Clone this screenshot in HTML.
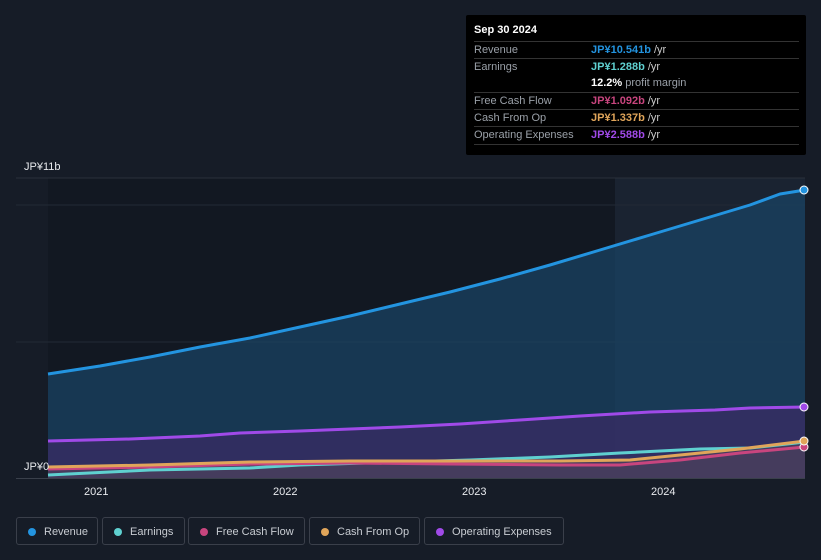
<!DOCTYPE html>
<html><head><style>
body{margin:0;background:#161c27;font-family:"Liberation Sans",sans-serif;width:821px;height:560px;overflow:hidden;position:relative}
.tip{position:absolute;left:466px;top:15px;width:340px;height:140px;background:#000;border-radius:2px;color:#fff;font-size:11px}
.tip .h{position:absolute;left:8px;top:9px;font-weight:bold;font-size:11px}
.row{position:absolute;left:8px;width:325px;border-top:1px solid #333;height:17px;line-height:17px;color:#9aa0a8}
.row span{position:absolute;left:117px}
.leg{position:absolute;top:517px;height:28px;border:1px solid #3a3f4a;border-radius:3px;color:#c8ccd2;font-size:11px;line-height:28px;box-sizing:border-box}
.leg i{position:absolute;left:11px;top:10px;width:8px;height:8px;border-radius:50%}
.leg b{font-weight:normal;position:absolute;left:27px}
</style></head><body>
<svg width="821" height="560" style="position:absolute;left:0;top:0">
<rect x="48" y="178" width="567" height="300" fill="#121822"/>
<rect x="615" y="178" width="190" height="300" fill="#1a2331"/>
<line x1="16" y1="178" x2="805" y2="178" stroke="#2a303b"/>
<line x1="16" y1="205" x2="805" y2="205" stroke="#232a35"/>
<line x1="16" y1="342" x2="805" y2="342" stroke="#232a35"/>
<line x1="16" y1="478.5" x2="805" y2="478.5" stroke="#3a404b"/>
<path d="M48,374 100,366 150,357 200,347 250,338 300,327 350,316 400,304 450,292 500,279 550,265 600,250 650,235 700,220 750,205 780,194 805,190 V478 H48Z" fill="#1a4566" fill-opacity="0.7"/>
<path d="M48,441 130,439 200,436 240,433 300,431 400,427 460,424 520,420 580,416 650,412 715,410 750,408 805,407 V478 H48Z" fill="#3a2c66" fill-opacity="0.75"/>
<path d="M48,467 150,465 250,462 350,461 450,461 560,461 630,460 680,455 740,449 805,441 V478 H48Z" fill="#5a4a5a" fill-opacity="0.5"/>
<g fill="none" stroke-width="3" stroke-linejoin="round">
<polyline points="48,374 100,366 150,357 200,347 250,338 300,327 350,316 400,304 450,292 500,279 550,265 600,250 650,235 700,220 750,205 780,194 805,190" stroke="#2394e0"/>
<polyline points="48,441 130,439 200,436 240,433 300,431 400,427 460,424 520,420 580,416 650,412 715,410 750,408 805,407" stroke="#a04ae8"/>
<polyline points="48,475 150,470 250,468 300,465 400,462 470,460 550,457 620,453 700,449 750,448 805,442" stroke="#5fd0d0"/>
<polyline points="48,469 150,467 250,464 350,463 450,464 560,465 620,465 680,460 740,453 805,447" stroke="#c8457e"/>
<polyline points="48,467 150,465 250,462 350,461 450,461 560,461 630,460 680,455 740,449 805,441" stroke="#e0a55a"/>
</g>
<circle cx="804" cy="190" r="4" fill="#2394e0" stroke="#fff"/>
<circle cx="804" cy="407" r="4" fill="#a04ae8" stroke="#fff"/>
<circle cx="804" cy="447" r="4" fill="#c8457e" stroke="#fff"/>
<circle cx="804" cy="441" r="4" fill="#e0a55a" stroke="#fff"/>
<g fill="#e8eaee" font-size="11" font-family="Liberation Sans">
<text x="24" y="170">JP¥11b</text>
<text x="24" y="470">JP¥0</text>
<text x="84" y="495">2021</text><text x="273" y="495">2022</text><text x="462" y="495">2023</text><text x="651" y="495">2024</text>
</g>
</svg>
<div class="tip"><div class="h">Sep 30 2024</div>
<div class="row" style="top:26px">Revenue<span style="color:#2394e0;font-weight:bold">JP¥10.541b <em style="font-style:normal;font-weight:normal;color:#ccc">/yr</em></span></div>
<div class="row" style="top:43px">Earnings<span style="color:#5fd0d0;font-weight:bold">JP¥1.288b <em style="font-style:normal;font-weight:normal;color:#ccc">/yr</em></span></div>
<div class="row" style="top:60px;border:0"><span style="color:#fff;font-weight:bold">12.2% <em style="font-style:normal;font-weight:normal;color:#9aa0a8">profit margin</em></span></div>
<div class="row" style="top:77px">Free Cash Flow<span style="color:#c8457e;font-weight:bold">JP¥1.092b <em style="font-style:normal;font-weight:normal;color:#ccc">/yr</em></span></div>
<div class="row" style="top:94px">Cash From Op<span style="color:#e0a55a;font-weight:bold">JP¥1.337b <em style="font-style:normal;font-weight:normal;color:#ccc">/yr</em></span></div>
<div class="row" style="top:111px">Operating Expenses<span style="color:#a04ae8;font-weight:bold">JP¥2.588b <em style="font-style:normal;font-weight:normal;color:#ccc">/yr</em></span></div>
<div class="row" style="top:129px;height:0"></div>
</div>
<div class="leg" style="left:16px;width:82px"><i style="background:#2394e0"></i><b>Revenue</b></div>
<div class="leg" style="left:102px;width:83px"><i style="background:#5fd0d0"></i><b>Earnings</b></div>
<div class="leg" style="left:188px;width:117px"><i style="background:#c8457e"></i><b>Free Cash Flow</b></div>
<div class="leg" style="left:309px;width:111px"><i style="background:#e0a55a"></i><b>Cash From Op</b></div>
<div class="leg" style="left:424px;width:140px"><i style="background:#a04ae8"></i><b>Operating Expenses</b></div>
</body></html>
